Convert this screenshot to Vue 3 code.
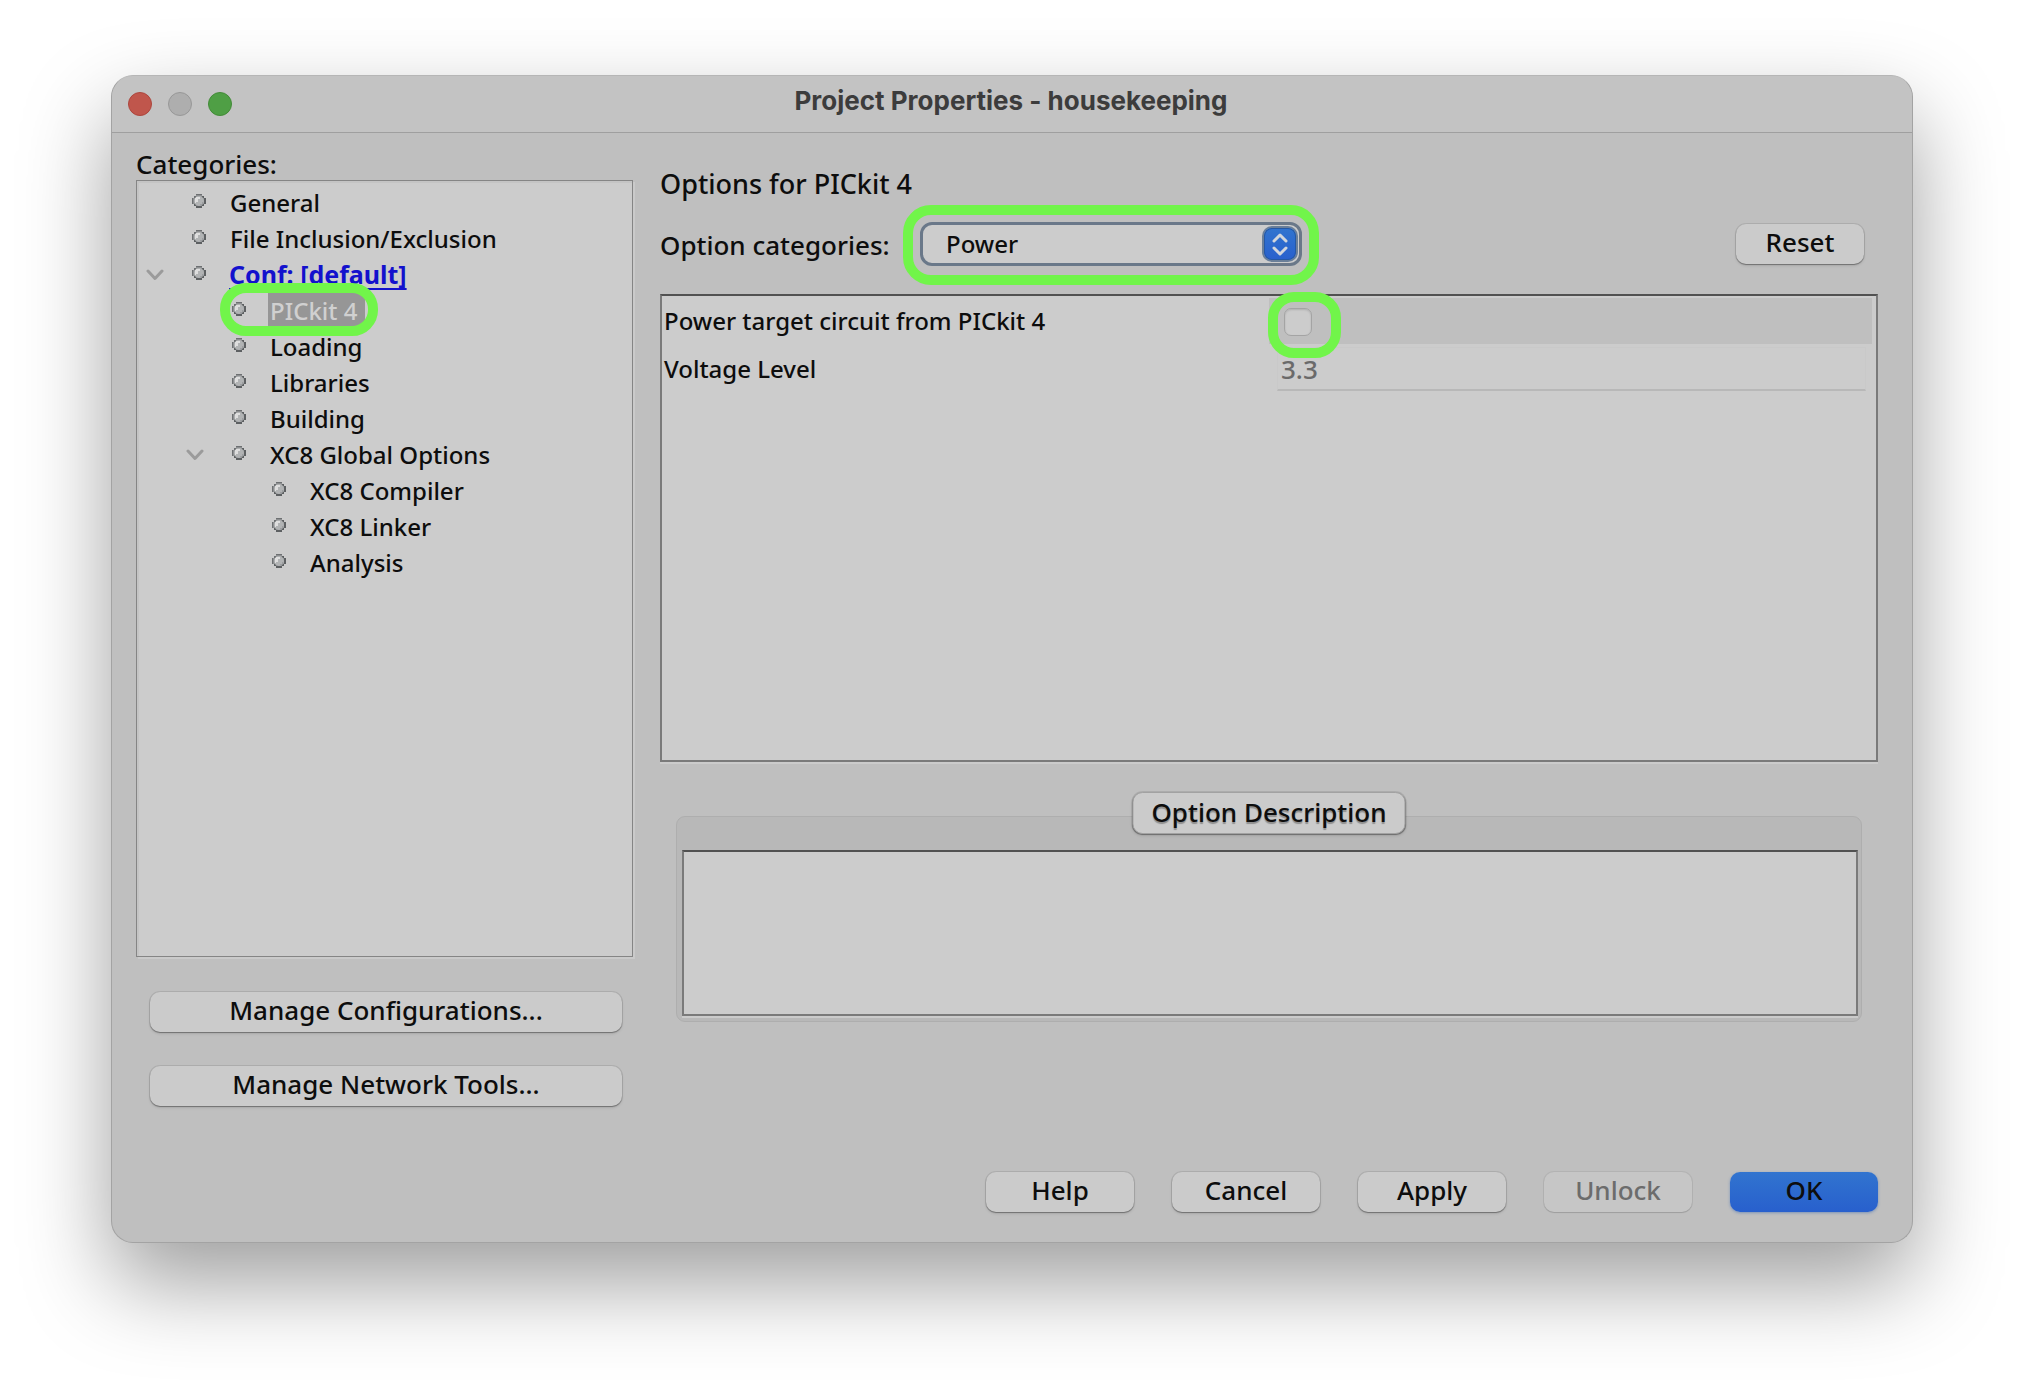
<script setup>
import { ref } from 'vue'

const categories = [
  { name: 'General', level: 0 },
  { name: 'File Inclusion/Exclusion', level: 0 },
  { name: 'Conf: [default]', level: 0, expanded: true, link: true },
  { name: 'PICkit 4', level: 1, selected: true },
  { name: 'Loading', level: 1 },
  { name: 'Libraries', level: 1 },
  { name: 'Building', level: 1 },
  { name: 'XC8 Global Options', level: 1, expanded: true },
  { name: 'XC8 Compiler', level: 2 },
  { name: 'XC8 Linker', level: 2 },
  { name: 'Analysis', level: 2 },
]

const optionCategory = ref('Power')
const powerTarget = ref(false)
const voltage = ref('3.3')
</script>

<template>
  <div class="page">
    <main class="window">
      <header class="titlebar">
        <div class="lights">
          <span class="light close"></span>
          <span class="light minimise"></span>
          <span class="light zoom"></span>
        </div>
        <h1 class="title">Project Properties - housekeeping</h1>
      </header>

      <div class="body">
        <section class="sidebar">
          <h2 id="categories" class="side-label">Categories:</h2>
          <ul class="tree" aria-labelledby="categories">
            <li v-for="item in categories" :key="item.name" :class="['item', 'level-' + item.level]">
              <span class="toggle">
                <svg v-if="item.expanded" width="18" height="12" viewBox="0 0 18 12">
                  <path d="M2 2 L9 9.5 L16 2" fill="none" stroke="#9b9b9b" stroke-width="3" stroke-linecap="round" stroke-linejoin="round" />
                </svg>
              </span>
              <span class="node">
                <span class="bullet">
                  <svg width="14" height="14" viewBox="0 0 14 14">
                    <path d="M4 0H10V2H12V4H14V10H12V12H10V14H4V12H2V10H0V4H2V2H4Z" fill="#8d8f91" />
                    <path d="M4 12H10V14H4ZM12 4H14V10H12ZM10 2H12V4H10ZM2 10H4V12H2ZM10 10H12V12H10Z" fill="#5d6062" />
                    <path d="M4 0H10V1H4ZM0 4H1V10H0ZM2 2H4V4H2Z" fill="#6d7072" />
                    <circle cx="7" cy="7" r="5" fill="#b1b3b4" />
                    <path d="M4 3H8V5H6V8H4V9H3V4H4Z" fill="#dedede" />
                    <path d="M8 10H10V8H11V10H10V11H8Z" fill="#9b9da0" />
                  </svg>
                </span>
                <a v-if="item.link" href="#" class="name link">{{ item.name }}</a>
                <span v-else :class="['name', { selected: item.selected }]">{{ item.name }}</span>
                <span v-if="item.selected" class="ring ring-node"></span>
              </span>
            </li>
          </ul>
          <div class="manage">
            <button type="button" class="btn">Manage Configurations...</button>
            <button type="button" class="btn">Manage Network Tools...</button>
          </div>
        </section>

        <section class="options">
          <h2 class="heading">Options for PICkit 4</h2>
          <div class="chooser">
            <label for="option-category" class="chooser-label">Option categories:</label>
            <div class="chooser-ring">
              <div class="combo">
                <select id="option-category" v-model="optionCategory" class="select">
                  <option>Power</option>
                </select>
                <span class="stepper">
                  <svg width="32" height="32" viewBox="0 0 32 32">
                    <path d="M10 13 L16 7 L22 13 M10 20 L16 26 L22 20" fill="none" stroke="#d2d6dc" stroke-width="3" stroke-linecap="round" stroke-linejoin="round" />
                  </svg>
                </span>
              </div>
            </div>
            <button type="button" class="btn reset">Reset</button>
          </div>

          <div class="panel sheet">
            <div class="row">
              <label for="power-target" class="row-label">Power target circuit from PICkit 4</label>
              <div class="cell check-cell">
                <span class="check-wrap">
                  <input id="power-target" v-model="powerTarget" type="checkbox" class="check" />
                  <span class="ring ring-check"></span>
                </span>
              </div>
            </div>
            <div class="row">
              <label for="voltage" class="row-label">Voltage Level</label>
              <div class="cell">
                <input id="voltage" v-model="voltage" type="text" class="field" disabled />
              </div>
            </div>
          </div>

          <div class="group">
            <button type="button" class="btn tab">Option Description</button>
            <div class="panel description"></div>
          </div>
        </section>
      </div>

      <footer class="footer">
        <button type="button" class="btn">Help</button>
        <button type="button" class="btn">Cancel</button>
        <button type="button" class="btn">Apply</button>
        <button type="button" class="btn" disabled>Unlock</button>
        <button type="button" class="btn primary">OK</button>
      </footer>
    </main>
  </div>
</template>

<style>
body {
  margin: 0;
  background: #fff;
}
</style>

<style scoped>
.page {
  box-sizing: border-box;
  padding: 75px 111px 147px;
  overflow: hidden;
  font-family: "Noto Sans", "Open Sans", sans-serif;
  font-size: 24px;
  font-weight: 500;
  color: #0d0d0d;
}
.page * {
  box-sizing: border-box;
}
.window {
  background: #bfbfbf;
  border: 1px solid #a3a3a3;
  border-top-color: #b6b6b6;
  border-radius: 22px;
  box-shadow: 0 40px 88px rgba(0, 0, 0, 0.38);
}
.titlebar {
  display: grid;
  grid-template-columns: 1fr auto 1fr;
  align-items: center;
  height: 57px;
  padding: 0 18px 0 16px;
  background: #c3c3c3;
  border-bottom: 1px solid #9f9f9f;
  border-radius: 21px 21px 0 0;
}
.lights {
  display: flex;
  gap: 16px;
}
.light {
  width: 24px;
  height: 24px;
  border: 1px solid;
  border-radius: 50%;
}
.close {
  background: #c0564c;
  border-color: #ad463d;
}
.minimise {
  background: #aeaeae;
  border-color: #989898;
}
.zoom {
  background: #4f9f45;
  border-color: #438b38;
}
.title {
  margin: 0;
  padding-bottom: 6px;
  font: 700 26px/32px Inter, sans-serif;
  color: #3c3c3c;
}

.body {
  display: grid;
  grid-template-columns: 499px 1fr;
  gap: 25px;
  padding: 15px 34px 0 24px;
}
.sidebar {
  display: flex;
  flex-direction: column;
}
.side-label {
  margin: 0;
  font-size: 26px;
  line-height: 32px;
  font-weight: 500;
}
.tree {
  flex: 1;
  min-height: 777px;
  margin: 0 2px 2px 0;
  padding: 4px 0;
  list-style: none;
  background: #ccc;
  border: 1px solid #858585;
  box-shadow: 2px 2px 0 #cacaca, inset 3px 3px 0 -1px #c4c4c4;
}
.item {
  display: flex;
  height: 36px;
  line-height: 36px;
}
.level-1 {
  padding-left: 40px;
}
.level-2 {
  padding-left: 80px;
}
.toggle {
  display: flex;
  align-items: center;
  justify-content: center;
  width: 36px;
}
.node {
  position: relative;
  display: flex;
}
.bullet {
  display: flex;
  align-items: center;
  justify-content: center;
  width: 52px;
  padding-bottom: 4px;
}
.name {
  margin-left: 3px;
  padding: 0 8px 0 2px;
  white-space: nowrap;
}
.link {
  margin-left: 4px;
  padding: 0;
  font-size: 25px;
  font-weight: 700;
  line-height: 34px;
  color: #1311cd;
  text-decoration: underline;
  text-decoration-thickness: 2px;
  text-underline-offset: 4px;
  text-decoration-skip-ink: none;
}
.selected {
  background: #969696;
  color: #d0d0d0;
}
.ring {
  position: absolute;
  z-index: 1;
  border: 10px solid #71f54a;
  border-radius: 26px;
  pointer-events: none;
}
.ring-node {
  inset: -10px -13px -7px 7px;
}
.manage {
  display: flex;
  flex-direction: column;
  gap: 34px;
  margin: 33px 13px 0 14px;
}

.btn {
  height: 40px;
  padding: 0 16px 4px;
  border: 0;
  border-radius: 10px;
  background: #cbcbcb;
  box-shadow: 0 0 0 1px rgba(0, 0, 0, 0.09), 0 1px 1px rgba(0, 0, 0, 0.28), 0 2px 3px rgba(0, 0, 0, 0.1);
  font: 500 26px/36px "Noto Sans", "Open Sans", sans-serif;
  color: #0d0d0d;
  white-space: nowrap;
}
.btn:disabled {
  background: #c6c6c6;
  box-shadow: 0 0 0 1px rgba(0, 0, 0, 0.06), 0 1px 1px rgba(0, 0, 0, 0.12);
  color: #6c6c6c;
}
.primary {
  background: linear-gradient(#3174cf, #2860cd);
  box-shadow: 0 1px 3px rgba(40, 96, 180, 0.45);
}

.options {
  min-width: 0;
}
.heading {
  margin: 19px 0 4px;
  font-size: 27px;
  line-height: 34px;
  font-weight: 500;
}
.chooser {
  display: flex;
  align-items: center;
  margin-bottom: 9px;
}
.chooser-label {
  width: 243px;
  font-size: 26px;
}
.chooser-ring {
  width: 416px;
  height: 80px;
  padding: 7px;
  border: 10px solid #71f54a;
  border-radius: 28px;
}
.combo {
  position: relative;
}
.select {
  display: block;
  width: 100%;
  height: 44px;
  padding: 0 48px 0 23px;
  appearance: none;
  border: 3px solid #6a7889;
  border-radius: 12px;
  background: #ccc;
  font: 500 24px/36px "Noto Sans", "Open Sans", sans-serif;
  color: #0d0d0d;
}
.stepper {
  position: absolute;
  top: 6px;
  right: 6px;
  width: 32px;
  height: 32px;
  border-radius: 8px;
  background: linear-gradient(#3174cf, #2860cd);
  box-shadow: inset 0 0 0 1px #2558a4, 0 0 0 2px #6a7f99;
  pointer-events: none;
}
.reset {
  width: 128px;
  margin: 0 14px 2px auto;
}

.panel {
  background: #ccc;
  border: 2px solid #7a7a7a;
  border-top-color: #515151;
  box-shadow: 0 2px 0 #cbcbcb;
}
.sheet {
  min-height: 468px;
  padding: 2px;
}
.row {
  display: grid;
  grid-template-columns: 1fr 1fr;
  align-items: center;
  height: 46px;
  margin-bottom: 2px;
}
.row-label {
  padding-bottom: 2px;
}
.cell {
  display: flex;
  align-items: center;
  height: 100%;
  padding: 0 8px;
}
.check-cell {
  margin-right: 2px;
  padding: 2px 15px 0;
  background: #bfbfbf;
}
.check-wrap {
  position: relative;
  display: flex;
}
.check {
  width: 28px;
  height: 28px;
  margin: 0;
  appearance: none;
  border: 1px solid #a4a4a4;
  border-radius: 7px;
  background: #ccc;
  box-shadow: inset 0 1px 2px rgba(0, 0, 0, 0.14);
}
.ring-check {
  inset: -16px -29px -22px -16px;
}
.field {
  width: 100%;
  height: 44px;
  padding: 0 3px;
  border: 1px solid #c9c9c9;
  border-bottom: 2px solid #b8b8b8;
  background: #ccc;
  font: 500 26px/36px "Noto Sans", "Open Sans", sans-serif;
  color: #6a6a6a;
}

.group {
  position: relative;
  margin: 54px 16px 0;
  padding: 33px 3px 5px 5px;
  border: 1px solid #aeaeae;
  border-radius: 9px;
  background: #b8b8b8;
}
.tab {
  position: absolute;
  top: -25px;
  left: 50%;
  height: 42px;
  padding: 0 18px 2px;
  transform: translateX(-50%);
  border: 1px solid #a2a2a2;
  text-shadow: 0 2px 1px rgba(0, 0, 0, 0.3);
}
.description {
  height: 166px;
}

.footer {
  display: flex;
  justify-content: flex-end;
  gap: 38px;
  padding: 66px 34px 30px;
}
.footer .btn {
  width: 148px;
}
</style>
